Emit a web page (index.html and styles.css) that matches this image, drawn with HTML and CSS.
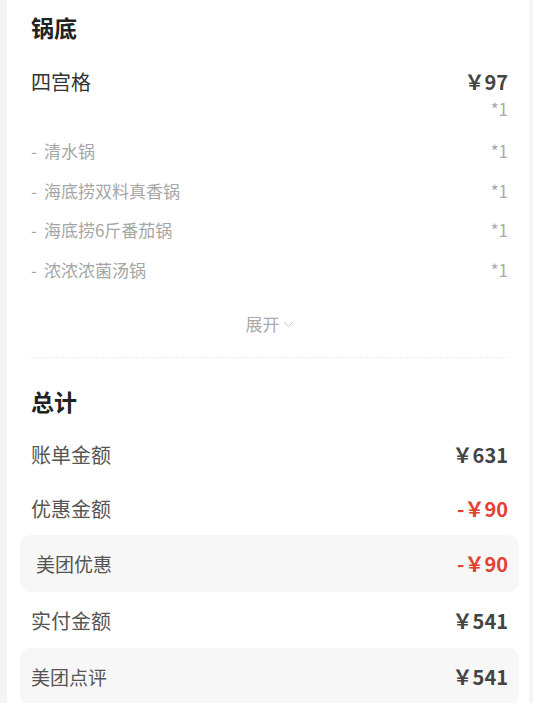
FILE: index.html
```html
<!DOCTYPE html>
<html lang="zh-CN">
<head>
    <meta charset="UTF-8">
    <meta name="viewport" content="width=device-width, initial-scale=1.0">
    <title>订单详情</title>
    <link rel="stylesheet" href="styles.css">
</head>
<body>
    <div class="card">
        <!-- 锅底 -->
        <h3 class="titulo">锅底</h3>
        <div class="item">
            <span class="nombre">四宫格</span>
            <span class="precio">￥97</span>
        </div>
        <div class="cantidad">*1</div>
        <div class="sub-items">
            <div class="sub-item"><span><i class="guion">-</i>清水锅</span><span class="num">*1</span></div>
            <div class="sub-item"><span><i class="guion">-</i>海底捞双料真香锅</span><span class="num">*1</span></div>
            <div class="sub-item"><span><i class="guion">-</i>海底捞6斤番茄锅</span><span class="num">*1</span></div>
            <div class="sub-item"><span><i class="guion">-</i>浓浓浓菌汤锅</span><span class="num">*1</span></div>
        </div>
        <div class="expandir">
            展开
            <svg width="11" height="7" viewBox="0 0 11 7"><path d="M1 1l4.5 4.5L10 1" fill="none" stroke="#c8c8c8" stroke-width="1"/></svg>
        </div>
        <div class="separador"></div>

        <!-- 总计 -->
        <h3 class="titulo titulo-total">总计</h3>
        <div class="fila">
            <span>账单金额</span>
            <span class="precio">￥631</span>
        </div>
        <div class="fila">
            <span>优惠金额</span>
            <span class="precio rojo">-￥90</span>
        </div>
        <div class="caja caja-descuento">
            <span>美团优惠</span>
            <span class="precio rojo">-￥90</span>
        </div>
        <div class="fila fila-pago">
            <span>实付金额</span>
            <span class="precio">￥541</span>
        </div>
        <div class="caja">
            <span>美团点评</span>
            <span class="precio">￥541</span>
        </div>
    </div>
</body>
</html>
```

FILE: styles.css
```css
body {
    font-family: "Noto Sans CJK SC", "Noto Sans", sans-serif;
    background-color: #f4f4f4;
    margin: 0;
    padding: 0;
}
.card {
    background-color: #fff;
    margin: 0 4px 0 7px;
    padding: 0 21px 0 24px;
    height: 703px;
    overflow: hidden;
}
.titulo {
    margin: 0;
    font-size: 23px;
    font-weight: bold;
    color: #222;
    line-height: 54px;
    height: 54px;
}
.titulo-total {
    margin-top: 16px;
    height: 53px;
}
.item {
    display: flex;
    justify-content: space-between;
    align-items: center;
    margin-top: 13px;
    height: 28px;
    font-size: 20px;
    color: #333;
}
.precio {
    font-weight: bold;
    font-size: 20px;
    color: #444;
}
.rojo {
    color: #e4402f;
}
.cantidad {
    text-align: right;
    margin-top: 3px;
    line-height: 22px;
    font-size: 17px;
    color: #aaa;
}
.sub-items {
    margin-top: 11px;
}
.sub-item {
    display: flex;
    justify-content: space-between;
    line-height: 39.5px;
    font-size: 17px;
    color: #a6a6a6;
}
.guion {
    font-style: normal;
    margin-right: 7px;
}
.sub-item .num {
    color: #aaa;
}
.expandir {
    display: flex;
    justify-content: center;
    align-items: center;
    gap: 3px;
    margin-top: 15px;
    line-height: 40px;
    font-size: 17px;
    color: #aaa;
}
.separador {
    margin-top: 13px;
    border-top: 1px dashed #ececec;
}
.fila {
    display: flex;
    justify-content: space-between;
    align-items: center;
    height: 54px;
    font-size: 20px;
    color: #555;
}
.fila-pago {
    height: 56px;
}
.caja {
    display: flex;
    justify-content: space-between;
    align-items: center;
    height: 57px;
    margin: 0 -11px;
    padding: 0 11px;
    background-color: #f7f7f7;
    border-radius: 10px;
    font-size: 19px;
    color: #555;
}
.caja-descuento {
    padding-left: 16px;
}
```
